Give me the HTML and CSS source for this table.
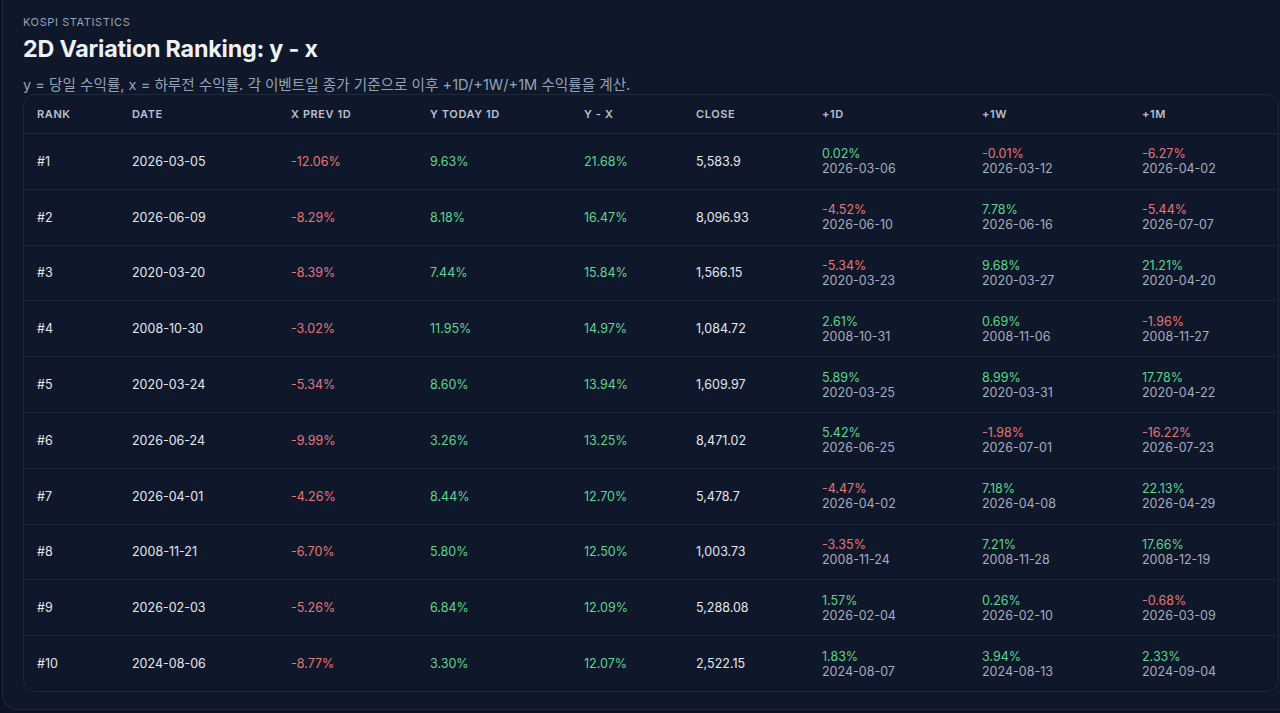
FILE: index.html
```html
<!DOCTYPE html>
<html lang="ko">
<head>
<meta charset="utf-8">
<title>KOSPI Statistics</title>
<link rel="stylesheet" href="styles.css">
</head>
<body>
<section class="panel">
  <div class="eyebrow">KOSPI STATISTICS</div>
  <h1 class="title">2D Variation Ranking: y - x</h1>
  <p class="subtitle">y = 당일 수익률, x = 하루전 수익률. 각 이벤트일 종가 기준으로 이후 +1D/+1W/+1M 수익률을 계산.</p>
  <div class="table-card">
    <table class="rank-table">
      <colgroup>
        <col class="c-rank"><col class="c-date"><col class="c-x"><col class="c-y"><col class="c-yx"><col class="c-close"><col class="c-f"><col class="c-f"><col class="c-last">
      </colgroup>
      <thead>
        <tr><th>Rank</th><th>Date</th><th>x Prev 1D</th><th>y Today 1D</th><th>y - x</th><th>Close</th><th>+1D</th><th>+1W</th><th>+1M</th></tr>
      </thead>
      <tbody>
        <tr><td>#1</td><td>2026-03-05</td><td class="neg">-12.06%</td><td class="pos">9.63%</td><td class="pos">21.68%</td><td>5,583.9</td>
          <td><span class="pos">0.02%</span><span class="sub">2026-03-06</span></td>
          <td><span class="neg">-0.01%</span><span class="sub">2026-03-12</span></td>
          <td><span class="neg">-6.27%</span><span class="sub">2026-04-02</span></td></tr>
        <tr><td>#2</td><td>2026-06-09</td><td class="neg">-8.29%</td><td class="pos">8.18%</td><td class="pos">16.47%</td><td>8,096.93</td>
          <td><span class="neg">-4.52%</span><span class="sub">2026-06-10</span></td>
          <td><span class="pos">7.78%</span><span class="sub">2026-06-16</span></td>
          <td><span class="neg">-5.44%</span><span class="sub">2026-07-07</span></td></tr>
        <tr><td>#3</td><td>2020-03-20</td><td class="neg">-8.39%</td><td class="pos">7.44%</td><td class="pos">15.84%</td><td>1,566.15</td>
          <td><span class="neg">-5.34%</span><span class="sub">2020-03-23</span></td>
          <td><span class="pos">9.68%</span><span class="sub">2020-03-27</span></td>
          <td><span class="pos">21.21%</span><span class="sub">2020-04-20</span></td></tr>
        <tr><td>#4</td><td>2008-10-30</td><td class="neg">-3.02%</td><td class="pos">11.95%</td><td class="pos">14.97%</td><td>1,084.72</td>
          <td><span class="pos">2.61%</span><span class="sub">2008-10-31</span></td>
          <td><span class="pos">0.69%</span><span class="sub">2008-11-06</span></td>
          <td><span class="neg">-1.96%</span><span class="sub">2008-11-27</span></td></tr>
        <tr><td>#5</td><td>2020-03-24</td><td class="neg">-5.34%</td><td class="pos">8.60%</td><td class="pos">13.94%</td><td>1,609.97</td>
          <td><span class="pos">5.89%</span><span class="sub">2020-03-25</span></td>
          <td><span class="pos">8.99%</span><span class="sub">2020-03-31</span></td>
          <td><span class="pos">17.78%</span><span class="sub">2020-04-22</span></td></tr>
        <tr><td>#6</td><td>2026-06-24</td><td class="neg">-9.99%</td><td class="pos">3.26%</td><td class="pos">13.25%</td><td>8,471.02</td>
          <td><span class="pos">5.42%</span><span class="sub">2026-06-25</span></td>
          <td><span class="neg">-1.98%</span><span class="sub">2026-07-01</span></td>
          <td><span class="neg">-16.22%</span><span class="sub">2026-07-23</span></td></tr>
        <tr><td>#7</td><td>2026-04-01</td><td class="neg">-4.26%</td><td class="pos">8.44%</td><td class="pos">12.70%</td><td>5,478.7</td>
          <td><span class="neg">-4.47%</span><span class="sub">2026-04-02</span></td>
          <td><span class="pos">7.18%</span><span class="sub">2026-04-08</span></td>
          <td><span class="pos">22.13%</span><span class="sub">2026-04-29</span></td></tr>
        <tr><td>#8</td><td>2008-11-21</td><td class="neg">-6.70%</td><td class="pos">5.80%</td><td class="pos">12.50%</td><td>1,003.73</td>
          <td><span class="neg">-3.35%</span><span class="sub">2008-11-24</span></td>
          <td><span class="pos">7.21%</span><span class="sub">2008-11-28</span></td>
          <td><span class="pos">17.66%</span><span class="sub">2008-12-19</span></td></tr>
        <tr><td>#9</td><td>2026-02-03</td><td class="neg">-5.26%</td><td class="pos">6.84%</td><td class="pos">12.09%</td><td>5,288.08</td>
          <td><span class="pos">1.57%</span><span class="sub">2026-02-04</span></td>
          <td><span class="pos">0.26%</span><span class="sub">2026-02-10</span></td>
          <td><span class="neg">-0.68%</span><span class="sub">2026-03-09</span></td></tr>
        <tr><td>#10</td><td>2024-08-06</td><td class="neg">-8.77%</td><td class="pos">3.30%</td><td class="pos">12.07%</td><td>2,522.15</td>
          <td><span class="pos">1.83%</span><span class="sub">2024-08-07</span></td>
          <td><span class="pos">3.94%</span><span class="sub">2024-08-13</span></td>
          <td><span class="pos">2.33%</span><span class="sub">2024-09-04</span></td></tr>
      </tbody>
    </table>
  </div>
</section>
</body>
</html>
```
FILE: styles.css
```css
html, body {
  margin: 0;
  padding: 0;
  background: #0b1222;
  overflow: hidden;
  width: 1280px;
  height: 713px;
}
body {
  font-family: Inter, "Noto Sans CJK KR", "Noto Sans", sans-serif;
  color: #e2e8f0;
}
.panel {
  box-sizing: border-box;
  margin: -20px 0 0 2px;
  width: 1300px;
  height: 730px;
  padding: 34px 0 0 20px;
  background: #0f172a;
  border: 1px solid #1e293b;
  border-radius: 14px;
}
.eyebrow {
  font-size: 11px;
  line-height: 14px;
  letter-spacing: 0.6px;
  color: #94a3b8;
}
.title {
  margin: 5px 0 0;
  font-size: 23.3px;
  line-height: 30px;
  font-weight: 700;
  color: #eef2f8;
  letter-spacing: -0.2px;
}
.subtitle {
  margin: 12px 0 0;
  font-size: 14.6px;
  line-height: 18px;
  color: #94a3b8;
}
.table-card {
  width: 1256px;
  box-sizing: border-box;
  border: 1px solid #1e293b;
  border-radius: 12px;
  background: #0f172a;
  overflow: hidden;
}
.rank-table {
  border-collapse: collapse;
  table-layout: fixed;
  width: 1256px;
}
.c-rank { width: 95px; }
.c-date { width: 159px; }
.c-x { width: 139px; }
.c-y { width: 154px; }
.c-yx { width: 112px; }
.c-close { width: 126px; }
.c-f { width: 160px; }
.c-last { width: 151px; }
.rank-table th {
  text-align: left;
  height: 38px;
  padding: 0 0 0 13px;
  font-size: 11px;
  font-weight: 600;
  letter-spacing: 0.6px;
  text-transform: uppercase;
  color: #b8c2d2;
  border-bottom: 1px solid #1e293b;
}
.rank-table td {
  height: 54.8px;
  padding: 0 0 0 13px;
  font-size: 12.5px;
  line-height: 15px;
  color: #e2e8f0;
  border-bottom: 1px solid #1c2639;
  vertical-align: middle;
}
.rank-table tbody tr:last-child td {
  border-bottom: none;
}
.rank-table td span {
  display: block;
}
.rank-table .pos { color: #5cd68d; }
.rank-table .neg { color: #e4767a; }
.rank-table td .sub {
  color: #a3adbd;
}
```
